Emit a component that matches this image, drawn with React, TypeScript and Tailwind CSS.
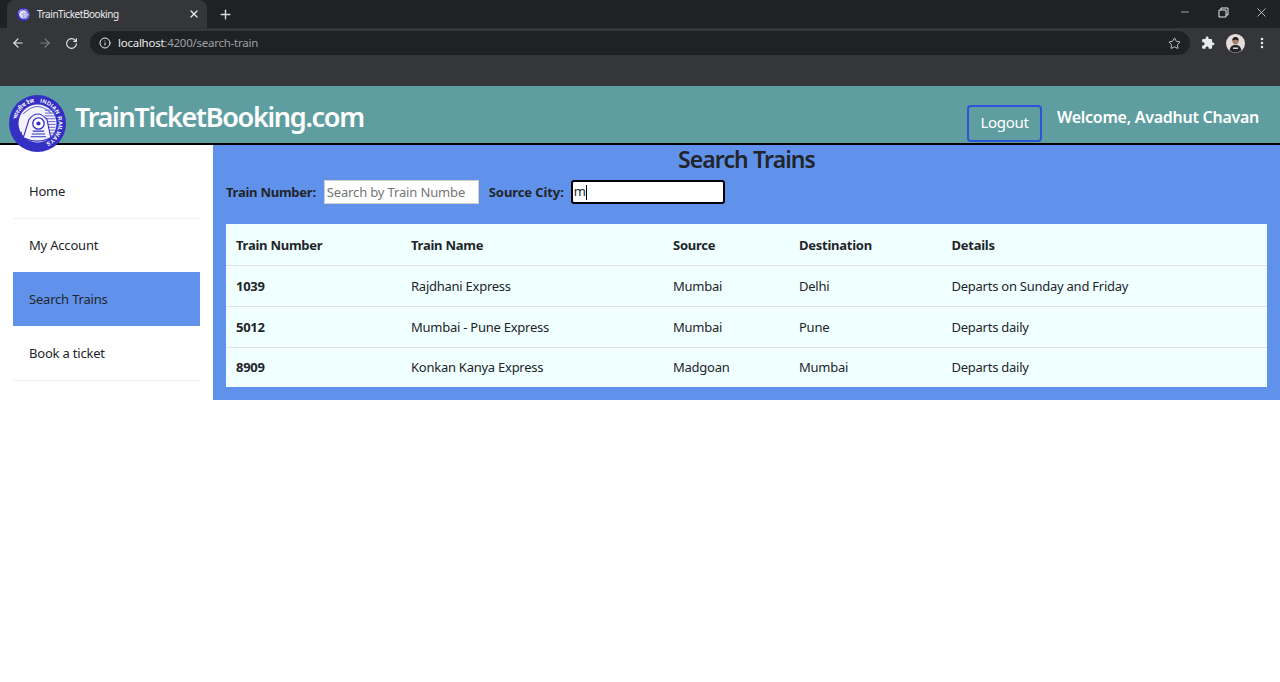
import React from "react";
import { ArrowLeft, ArrowRight, RotateCw, Info, Star, MoreVertical, X, Plus, Minus } from "lucide-react";

const Logo = ({ size, id }: { size: number; id: string }) => (
  <svg width={size} height={size} viewBox="0 0 60 60" className="shrink-0">
    <defs>
      <path id={id} d="M30 30 m-22.2 0 a22.2 22.2 0 1 1 44.4 0 a22.2 22.2 0 1 1 -44.4 0" />
    </defs>
    <circle cx="30" cy="30" r="30" fill="#3430c4" />
    <text fontSize="6" fontWeight="700" fill="#fff" fontFamily="'Liberation Sans', sans-serif" letterSpacing="0.3">
      <textPath href={`#${id}`} startOffset="27%">INDIAN RAILWAYS</textPath>
    </text>
    <text fontSize="6" fontWeight="700" fill="#fff" fontFamily="'Noto Sans', sans-serif">
      <textPath href={`#${id}`} startOffset="3%">भारतीय रेल</textPath>
    </text>
    <circle cx="30" cy="30" r="20" fill="#f4f3fc" />
    {[-14, -11, -8, -5, -2, 1, 4, 7, 10, 13].map((d) => (
      <line key={d} x1="38" x2="49" y1={30 + d} y2={30 + d} stroke="#6d69d4" strokeWidth="1.1" />
    ))}
    <path d="M15 20 Q30 4 45 20" fill="none" stroke="#6d69d4" strokeWidth="1.1" />
    <path d="M15 45 L21 26 Q30 14 40 26 L44 45 Q30 52 15 45Z" fill="#f4f3fc" stroke="#3430c4" strokeWidth="1.2" />
    <circle cx="31" cy="30" r="6" fill="#fff" stroke="#3430c4" strokeWidth="1.4" />
    <circle cx="31" cy="30" r="2.2" fill="#3430c4" />
    <path d="M25 38h12M24 41h14M23 44h16" stroke="#3430c4" strokeWidth="1.2" />
    <path d="M13 38l-3 9 5 1z" fill="#3430c4" />
  </svg>
);

const rows = [
  ["1039", "Rajdhani Express", "Mumbai", "Delhi", "Departs on Sunday and Friday"],
  ["5012", "Mumbai - Pune Express", "Mumbai", "Pune", "Departs daily"],
  ["8909", "Konkan Kanya Express", "Madgoan", "Mumbai", "Departs daily"],
];
const headers = ["Train Number", "Train Name", "Source", "Destination", "Details"];
const nav = ["Home", "My Account", "Search Trains", "Book a ticket"];

export default function App() {
  return (
    <div className="min-h-[682px] bg-white font-['Noto_Sans',sans-serif] text-[#212529]">
      {/* Tab strip */}
      <div className="flex h-[28px] items-end bg-[#202124]">
        <div className="ml-[7px] flex h-[28px] w-[200px] items-center rounded-t-lg bg-[#35363a] pl-[10px] pr-[7px]">
          <Logo size={13} id="tabring" />
          <span className="ml-[7px] flex-1 text-[10px] tracking-[-0.45px] text-[#e8eaed]">TrainTicketBooking</span>
          <X size={12} strokeWidth={2.5} className="text-[#e8eaed]" />
        </div>
        <div className="ml-[11px] flex h-[28px] items-center">
          <Plus size={15} strokeWidth={2.2} className="text-[#dadce0]" />
        </div>
        <div className="ml-auto flex h-[24px] items-center self-start text-[#e8eaed]">
          <div className="flex w-[38px] justify-center"><Minus size={12} strokeWidth={1.3} /></div>
          <div className="flex w-[38px] justify-center">
            <svg width="11" height="11" viewBox="0 0 11 11" fill="none" stroke="currentColor">
              <path d="M1 3h7v7H1zM3 3V1h7v7H8" />
            </svg>
          </div>
          <div className="flex w-[38px] justify-center"><X size={15} strokeWidth={1.2} /></div>
        </div>
      </div>
      {/* Toolbar */}
      <div className="flex h-[30px] items-center bg-[#35363a]">
        <div className="flex w-[90px] items-center pl-[11px] text-[#e8eaed]">
          <ArrowLeft size={14} strokeWidth={2} />
          <ArrowRight size={14} strokeWidth={2} className="ml-[13px] text-[#7d7f83]" />
          <RotateCw size={13} strokeWidth={2} className="ml-[13px]" />
        </div>
        <div className="flex h-[24px] w-[1100px] items-center rounded-full bg-[#202124] pl-[9px] pr-[9px] text-[11.5px] tracking-[-0.25px]">
          <Info size={12} className="text-[#e8eaed]" strokeWidth={2} />
          <span className="ml-[7px] text-[#e8eaed]">localhost</span>
          <span className="text-[#9aa0a6]">:4200/search-train</span>
          <Star size={13} className="ml-auto text-[#dadce0]" strokeWidth={1.6} />
        </div>
        <div className="flex flex-1 items-center text-[#e8eaed]">
          <svg width="14" height="14" viewBox="0 0 24 24" fill="currentColor" className="ml-[11px]">
            <path d="M20.5 11H19V7c0-1.1-.9-2-2-2h-4V3.5C13 2.12 11.88 1 10.5 1S8 2.12 8 3.5V5H4c-1.1 0-1.99.9-1.99 2v3.8H3.5c1.49 0 2.7 1.21 2.7 2.7s-1.21 2.7-2.7 2.7H2V20c0 1.1.9 2 2 2h3.8v-1.5c0-1.49 1.21-2.7 2.7-2.7 1.49 0 2.7 1.21 2.7 2.7V22H17c1.1 0 2-.9 2-2v-4h1.5c1.38 0 2.5-1.12 2.5-2.5S21.88 11 20.5 11z" />
          </svg>
          <svg width="19" height="19" viewBox="0 0 19 19" className="ml-[11px]">
            <circle cx="9.5" cy="9.5" r="9.5" fill="#e6dcdc" />
            <circle cx="9.5" cy="7.5" r="3" fill="#a87f6c" />
            <path d="M6.3 7c-.3-3 1.5-4 3.2-4s3.5 1 3.2 4c-1-1.6-5.4-1.6-6.4 0z" fill="#221a18" />
            <path d="M3.5 16.5c1-4.5 3-5.5 6-5.5s5 1 6 5.5a9.5 9.5 0 0 1-12 0z" fill="#24262a" />
            <path d="M7 13.5h5v1.5H7z" fill="#cfd3d8" />
          </svg>
          <MoreVertical size={14} strokeWidth={2.4} className="ml-[10px]" />
        </div>
      </div>
      {/* Empty bookmarks area */}
      <div className="h-[28px] bg-[#35363a]" />
      {/* App header */}
      <header className="flex h-[59px] items-start border-b-2 border-black bg-[#5f9ea0] text-white">
        <div className="relative z-10 ml-[9px] mt-[9px] h-[57px] w-[57px]"><Logo size={57} id="headring" /></div>
        <div className="ml-[9px] mt-[11px] text-[27px] font-semibold leading-[40px] tracking-[-1.3px]">TrainTicketBooking.com</div>
        <button className="ml-auto mt-[19px] h-[37px] w-[75px] rounded border-2 border-[#2f52d8] pb-[2px] text-[15px] tracking-[-0.3px]">Logout</button>
        <div className="ml-[15px] mr-[21px] mt-[19px] text-[16px] font-semibold leading-[24px] tracking-[-0.27px]">Welcome, Avadhut Chavan</div>
      </header>
      <div className="flex items-start">
        {/* Sidebar */}
        <aside className="w-[213px] shrink-0 px-[13px] pt-[20px] text-[13px] tracking-[-0.2px]">
          {nav.map((n) => (
            <div
              key={n}
              className={`flex items-center pl-[16px] ${
                n === "Search Trains" ? "-mt-px mb-px h-[54px] bg-[#6192eb] pt-[2px]" : "h-[54px] border-b border-[#f1f1f1]"
              }`}
            >
              {n}
            </div>
          ))}
        </aside>
        {/* Main */}
        <main className="h-[255px] flex-1 bg-[#6192eb] px-[13px]">
          <h1 className="h-[30px] text-center text-[23px] font-semibold leading-[29px] tracking-[-0.9px]">Search Trains</h1>
          <div className="mt-[5px] flex h-[24px] items-center text-[13px] font-bold tracking-[-0.25px]">
            <label className="pt-px">Train Number:</label>
            <input
              readOnly
              placeholder="Search by Train Number"
              className="ml-[8px] h-[24px] w-[155px] border border-[#d0d0d0] bg-white pl-[2px] pr-[13px] text-[13px] font-normal tracking-[-0.15px] placeholder:text-[#757575] focus:outline-none"
            />
            <label className="ml-[10px] pt-px tracking-[-0.1px]">Source City:</label>
            <div className="ml-[7px] flex h-[24px] w-[154px] items-center rounded-[3px] border-2 border-black bg-white px-px text-[13px] font-normal">
              m<span className="h-[15px] w-px bg-black" />
            </div>
          </div>
          <table className="mt-[20px] w-[1041px] table-fixed border-collapse bg-[#f0ffff] text-[13px] tracking-[-0.25px]">
            <colgroup>
              <col className="w-[175px]" />
              <col className="w-[262px]" />
              <col className="w-[126px]" />
              <col className="w-[152.5px]" />
              <col />
            </colgroup>
            <thead>
              <tr className="h-[41px] border-b border-[#dee2e6]">
                {headers.map((h) => (
                  <th key={h} className="px-[10px] pt-[2px] text-left font-bold">{h}</th>
                ))}
              </tr>
            </thead>
            <tbody>
              {rows.map((r, i) => (
                <tr key={r[0]} className={i < 2 ? "h-[41px] border-b border-[#dee2e6]" : "h-[40px]"}>
                  {r.map((c, j) => (
                    <td key={j} className={`px-[10px] ${i < 2 ? "pt-[2px]" : ""} ${j === 0 ? "font-bold" : ""}`}>{c}</td>
                  ))}
                </tr>
              ))}
            </tbody>
          </table>
        </main>
      </div>
    </div>
  );
}
